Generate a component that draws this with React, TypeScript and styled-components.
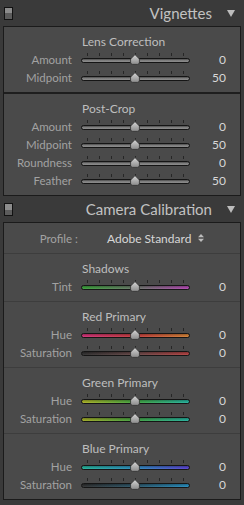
import React from 'react';
import styled, { createGlobalStyle } from 'styled-components';

const Global = createGlobalStyle`
  html, body { margin: 0; padding: 0; background: #3a3a3a; }
  body { font-family: Lato, "Open Sans", sans-serif; -webkit-font-smoothing: antialiased; }
`;

const Page = styled.div`
  width: 244px;
  height: 505px;
  background: #3a3a3a;
  display: flex;
  flex-direction: column;
`;

const Header = styled.div`
  height: 26px;
  display: flex;
  align-items: center;
  padding: 0 9px 0 4px;
`;

const Toggle = styled.div`
  width: 9px;
  height: 13px;
  box-sizing: border-box;
  border: 1px solid #121212;
  background: linear-gradient(#8c8c8c 0 50%, #5c5c5c 50% 100%);
`;

const HeaderTitle = styled.span`
  margin-left: auto;
  margin-right: 15px;
  font-size: 15px;
  color: #c2c2c2;
`;

const Panel = styled.div`
  margin: 0 3px;
  border: 1px solid #1b1b1b;
  background: #4a4a4a;
`;

const Section = styled.div<{ $sep?: 'strong' | 'soft' }>`
  padding: 5px 0 6px;
  border-top: ${(p) =>
    p.$sep === 'strong' ? '2px solid #1e1e1e' : p.$sep === 'soft' ? '1px solid #3d3d3d' : 'none'};
`;

const Row = styled.div`
  display: grid;
  grid-template-columns: 68px 109px 27px;
  column-gap: 9px;
  height: 18px;
  align-items: center;
`;

const Title = styled.div`
  grid-column: 2 / 4;
  padding-left: 1px;
  font-size: 12px;
  color: #bebebe;
`;

const Label = styled.div`
  text-align: right;
  font-size: 11.5px;
  color: #a2a2a2;
  white-space: nowrap;
`;

const Value = styled.div`
  text-align: right;
  font-size: 12px;
  color: #d8d8d8;
`;

const SliderBox = styled.div`
  position: relative;
  height: 18px;
  display: flex;
  flex-direction: column;
`;

const Ticks = styled.div`
  height: 3px;
  margin-top: 3px;
  background: repeating-linear-gradient(90deg, transparent 0 6px, #262626 6px 7px, transparent 7px 12px);
`;

const Bar = styled.div<{ $bg: string }>`
  height: 5px;
  margin-top: 2px;
  box-sizing: border-box;
  border: 1px solid #151515;
  border-radius: 3px;
  background: linear-gradient(180deg, rgba(0, 0, 0, 0.28), rgba(255, 255, 255, 0.06)), ${(p) => p.$bg};
`;

const Thumb = styled.svg`
  position: absolute;
  left: 49px;
  top: 4px;
  width: 10px;
  height: 11px;
`;

const ProfileRow = styled.div`
  height: 30px;
  display: flex;
  align-items: center;
  justify-content: center;
`;

const ProfileLabel = styled.span`
  font-size: 11.5px;
  color: #a2a2a2;
  margin-right: 29px;
`;

const ProfileValue = styled.span`
  font-size: 12px;
  color: #d6d6d6;
  margin-right: 7px;
`;

const gray = 'linear-gradient(180deg, #6a6a6a, #959595 60%, #808080)';

const Slider = ({ bg }: { bg: string }) => (
  <SliderBox>
    <Ticks />
    <Bar $bg={bg} />
    <Thumb viewBox="0 0 10 11">
      <defs>
        <linearGradient id="tg" x1="0" y1="0" x2="0" y2="1">
          <stop offset="0" stopColor="#d6d6d6" />
          <stop offset="1" stopColor="#8a8a8a" />
        </linearGradient>
      </defs>
      <path
        d="M5 0.6 L9.4 5 V8.4 Q9.4 10.4 7.4 10.4 H2.6 Q0.6 10.4 0.6 8.4 V5 Z"
        fill="url(#tg)"
        stroke="#2c2c2c"
        strokeWidth="0.8"
      />
    </Thumb>
  </SliderBox>
);

type Item = { label: string; value: string; bg?: string };

const Group = ({ title, items, sep }: { title: string; items: Item[]; sep?: 'strong' | 'soft' }) => (
  <Section $sep={sep}>
    <Row>
      <Title>{title}</Title>
    </Row>
    {items.map((it) => (
      <Row key={it.label}>
        <Label>{it.label}</Label>
        <Slider bg={it.bg ?? gray} />
        <Value>{it.value}</Value>
      </Row>
    ))}
  </Section>
);

const Caret = () => (
  <svg width="8" height="7" viewBox="0 0 8 7">
    <path d="M0 0 H8 L4 7 Z" fill="#bdbdbd" />
  </svg>
);

const PanelHeader = ({ title }: { title: string }) => (
  <Header>
    <Toggle />
    <HeaderTitle>{title}</HeaderTitle>
    <Caret />
  </Header>
);

const h = (a: string, b: string, c: string) => `linear-gradient(90deg, ${a}, ${b} 50%, ${c})`;

export default function App() {
  return (
    <Page>
      <Global />
      <PanelHeader title="Vignettes" />
      <Panel>
        <Group
          title="Lens Correction"
          items={[
            { label: 'Amount', value: '0' },
            { label: 'Midpoint', value: '50' },
          ]}
        />
        <Group
          title="Post-Crop"
          sep="strong"
          items={[
            { label: 'Amount', value: '0' },
            { label: 'Midpoint', value: '50' },
            { label: 'Roundness', value: '0' },
            { label: 'Feather', value: '50' },
          ]}
        />
      </Panel>
      <PanelHeader title="Camera Calibration" />
      <Panel>
        <ProfileRow>
          <ProfileLabel>Profile :</ProfileLabel>
          <ProfileValue>Adobe Standard</ProfileValue>
          <svg width="6" height="8" viewBox="0 0 6 8">
            <path d="M0 3.3 L3 0 L6 3.3 Z M0 4.7 H6 L3 8 Z" fill="#bcbcbc" />
          </svg>
        </ProfileRow>
        <Group
          title="Shadows"
          sep="soft"
          items={[{ label: 'Tint', value: '0', bg: h('#3aa63a', '#6a786a', '#b848b8') }]}
        />
        <Group
          title="Red Primary"
          sep="soft"
          items={[
            { label: 'Hue', value: '0', bg: h('#d8307a', '#c83c3c', '#d88434') },
            { label: 'Saturation', value: '0', bg: h('#2e2e2e', '#664646', '#b84040') },
          ]}
        />
        <Group
          title="Green Primary"
          sep="soft"
          items={[
            { label: 'Hue', value: '0', bg: h('#b0b824', '#40a840', '#22b8a2') },
            { label: 'Saturation', value: '0', bg: h('#a4ae24', '#40a440', '#22b4a0') },
          ]}
        />
        <Group
          title="Blue Primary"
          sep="soft"
          items={[
            { label: 'Hue', value: '0', bg: h('#22b89e', '#2a8cc0', '#5a42d8') },
            { label: 'Saturation', value: '0', bg: h('#2e2e2e', '#2a566a', '#2490c4') },
          ]}
        />
      </Panel>
    </Page>
  );
}
